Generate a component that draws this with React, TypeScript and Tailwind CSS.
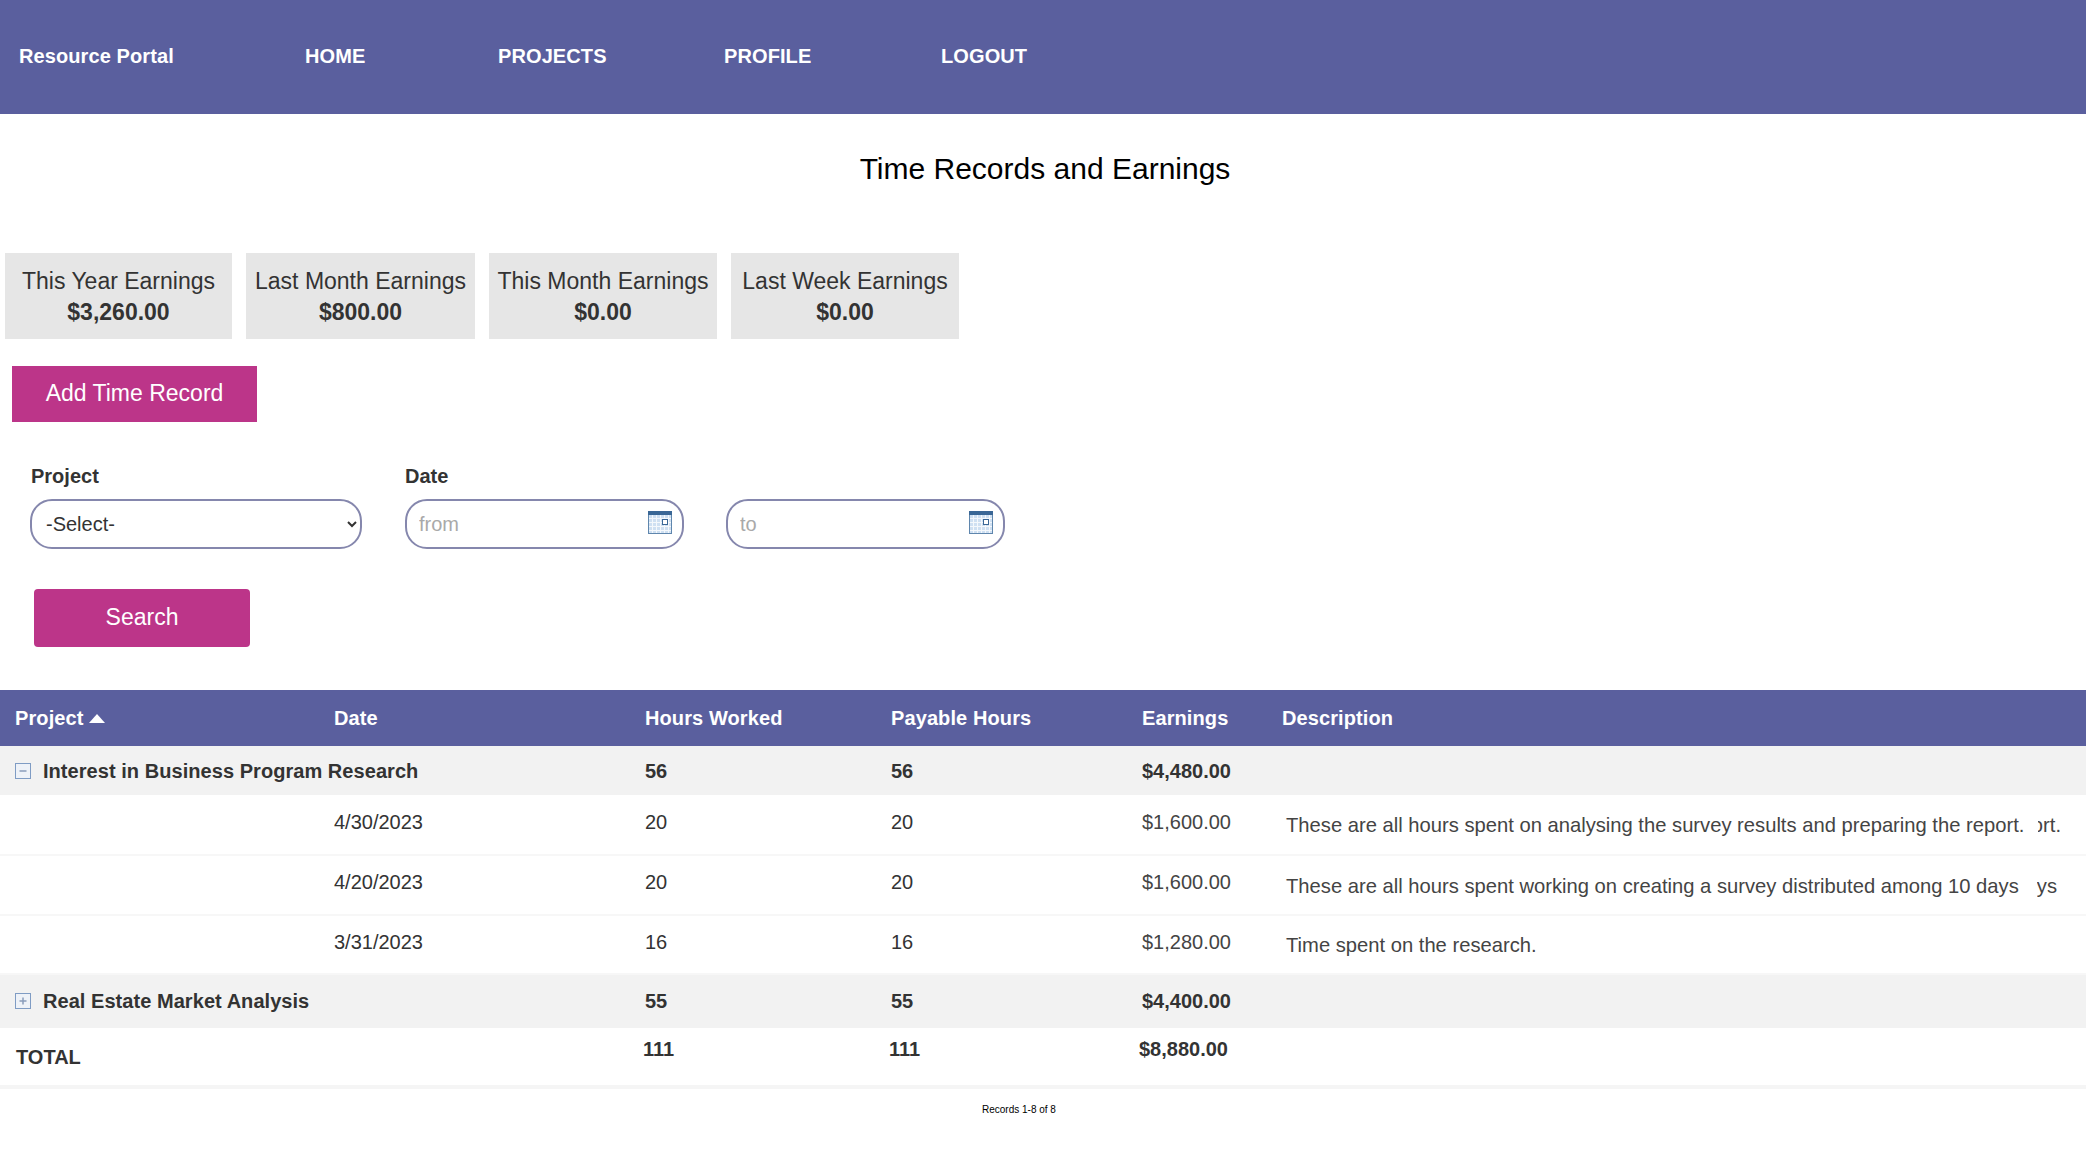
import React from 'react';

const earnings = [
    { label: 'This Year Earnings', value: '$3,260.00', width: 'w-[227px]' },
    { label: 'Last Month Earnings', value: '$800.00', width: 'w-[229px]' },
    { label: 'This Month Earnings', value: '$0.00', width: 'w-[228px]' },
    { label: 'Last Week Earnings', value: '$0.00', width: 'w-[228px]' },
];

const records = [
    { date: '4/30/2023', hours: 20, payable: 20, earnings: '$1,600.00', description: 'These are all hours spent on analysing the survey results and preparing the report.', tail: 'ort.', tailClass: 'w-[23px] mr-[25px]', height: 'h-[60px]' },
    { date: '4/20/2023', hours: 20, payable: 20, earnings: '$1,600.00', description: 'These are all hours spent working on creating a survey distributed among 10 days', tail: 'ys', tailClass: 'w-[20px] mr-[29px]', height: 'h-[60px]' },
    { date: '3/31/2023', hours: 16, payable: 16, earnings: '$1,280.00', description: 'Time spent on the research.', tail: '', tailClass: '', height: 'h-[59px]' },
];

function CalendarIcon() {
    return (
        <svg width="24" height="23" viewBox="0 0 24 23" className="absolute right-[12px] top-[12px]">
            <rect x="0.5" y="0.5" width="23" height="22" fill="#cfe0f2" stroke="#5f86ad" />
            <rect x="0" y="0" width="24" height="4" fill="#3a6796" />
            <path d="M4.5 4v18M8.5 4v18M12.5 4v18M16.5 4v18M20.5 4v18M1 7.5h22M1 11.5h22M1 15.5h22M1 19.5h22" stroke="#f4f8fc" strokeWidth="1" />
            <rect x="14.5" y="8.5" width="5" height="5" fill="#ffffff" stroke="#3a6796" />
        </svg>
    );
}

function ExpandIcon({ open }: { open: boolean }) {
    return (
        <svg width="16" height="16" viewBox="0 0 16 16" className="shrink-0">
            <rect x="0.5" y="0.5" width="15" height="15" fill="#eef2f8" stroke="#7f9cc4" />
            <path d={open ? 'M4.5 8h7' : 'M4.5 8h7M8 4.5v7'} stroke="#8a9dbb" strokeWidth="1.5" />
        </svg>
    );
}

function DateInput({ placeholder }: { placeholder: string }) {
    return (
        <div className="relative w-[279px] h-[50px]">
            <input
                placeholder={placeholder}
                className="w-full h-full rounded-[22px] border-2 border-[#8587ad] pl-[12px] pr-[44px] text-[20px] bg-white outline-none placeholder:text-[#a9a9a9]"
            />
            <CalendarIcon />
        </div>
    );
}

export default function App() {
    return (
        <div className="min-h-[1173px] bg-white text-[#333333] font-['Liberation_Sans',Arial,sans-serif] overflow-hidden">
            {/* Header */}
            <header className="h-[114px] bg-[#5a5f9e] flex items-center pl-[19px] pb-[2px] text-white font-bold text-[20px] tracking-[0.1px]">
                <span className="w-[286px]">Resource Portal</span>
                <span className="w-[193px]">HOME</span>
                <span className="w-[226px]">PROJECTS</span>
                <span className="w-[217px]">PROFILE</span>
                <span>LOGOUT</span>
            </header>

            <h1 className="h-[139px] pt-[36px] pl-[4px] text-center text-[30px] leading-[38px] text-black">
                Time Records and Earnings
            </h1>

            {/* Earnings */}
            <div className="flex gap-[14px] pl-[5px]">
                {earnings.map((item) => (
                    <div key={item.label} className={`${item.width} h-[86px] bg-[#e6e6e6] flex flex-col items-center justify-center text-[23px] leading-[30px]`}>
                        <span className="whitespace-nowrap">{item.label}</span>
                        <span className="font-bold pt-[1px]">{item.value}</span>
                    </div>
                ))}
            </div>

            <button className="block ml-[12px] mt-[27px] w-[245px] h-[56px] pb-[2px] bg-[#bc3589] text-white text-[23px]">
                Add Time Record
            </button>

            {/* Filters */}
            <div className="flex mt-[42px] pl-[30px]">
                <div className="w-[375px]">
                    <label className="block font-bold text-[20px] leading-[24px] mb-[11px] pl-[1px]">Project</label>
                    <select className="w-[332px] h-[50px] rounded-[22px] border-2 border-[#8587ad] pl-[10px] pr-[2px] text-[20px] bg-white outline-none">
                        <option>-Select-</option>
                    </select>
                </div>
                <div className="w-[321px]">
                    <label className="block font-bold text-[20px] leading-[24px] mb-[11px]">Date</label>
                    <DateInput placeholder="from" />
                </div>
                <div className="pt-[35px]">
                    <DateInput placeholder="to" />
                </div>
            </div>

            <button className="block ml-[34px] mt-[40px] w-[216px] h-[58px] pb-[2px] rounded-[4px] bg-[#bc3589] text-white text-[23px]">
                Search
            </button>

            {/* Table */}
            <table className="mt-[43px] w-full table-fixed text-[20px] border-collapse">
                <colgroup>
                    <col className="w-[334px]" />
                    <col className="w-[311px]" />
                    <col className="w-[246px]" />
                    <col className="w-[251px]" />
                    <col className="w-[140px]" />
                    <col />
                </colgroup>
                <thead>
                    <tr className="h-[56px] bg-[#5a5f9e] text-white font-bold text-left tracking-[0.1px]">
                        <th className="pl-[15px]">
                            <span className="flex items-center gap-[5px]">
                                Project
                                <svg width="16" height="9" viewBox="0 0 16 9"><path d="M8 0l8 9H0z" fill="#ffffff" /></svg>
                            </span>
                        </th>
                        <th>Date</th>
                        <th>Hours Worked</th>
                        <th>Payable Hours</th>
                        <th>Earnings</th>
                        <th>Description</th>
                    </tr>
                </thead>
                <tbody>
                    <tr className="h-[49px] bg-[#f2f2f2] font-bold">
                        <td colSpan={2} className="pl-[15px]">
                            <span className="flex items-center gap-[12px] tracking-[0.05px]">
                                <ExpandIcon open />
                                Interest in Business Program Research
                            </span>
                        </td>
                        <td>56</td>
                        <td>56</td>
                        <td>$4,480.00</td>
                        <td />
                    </tr>
                    {records.map((record) => (
                        <tr key={record.date} className={`${record.height} border-b-2 border-[#f7f7f7]`}>
                            <td />
                            <td className="pb-[6px]">{record.date}</td>
                            <td className="pb-[6px]">{record.hours}</td>
                            <td className="pb-[6px]">{record.payable}</td>
                            <td className="pb-[6px] text-[#444444]">{record.earnings}</td>
                            <td className="pl-[4px] pt-[2px]">
                                <div className="flex justify-between whitespace-nowrap text-[#444444] text-[20.2px]">
                                    <span>{record.description}</span>
                                    {record.tail && (
                                        <span className={`${record.tailClass} overflow-hidden flex justify-end`}>{record.tail}</span>
                                    )}
                                </div>
                            </td>
                        </tr>
                    ))}
                    <tr className="h-[54px] bg-[#f2f2f2] font-bold">
                        <td colSpan={2} className="pl-[15px] pb-[1px]">
                            <span className="flex items-center gap-[12px] tracking-[0.05px]">
                                <ExpandIcon open={false} />
                                Real Estate Market Analysis
                            </span>
                        </td>
                        <td className="pb-[1px]">55</td>
                        <td className="pb-[1px]">55</td>
                        <td className="pb-[1px]">$4,400.00</td>
                        <td />
                    </tr>
                    <tr className="h-[59px] font-bold border-b-[4px] border-[#f5f5f5]">
                        <td className="pl-[16px]">TOTAL</td>
                        <td />
                        <td className="pb-[15px]"><span className="-ml-[2px]">111</span></td>
                        <td className="pb-[15px]"><span className="-ml-[2px]">111</span></td>
                        <td className="pb-[15px]"><span className="-ml-[3px]">$8,880.00</span></td>
                        <td />
                    </tr>
                </tbody>
            </table>

            <p className="mt-[15px] pl-[982px] text-[10px] leading-[12px] text-black">Records 1-8 of 8</p>
        </div>
    );
}
